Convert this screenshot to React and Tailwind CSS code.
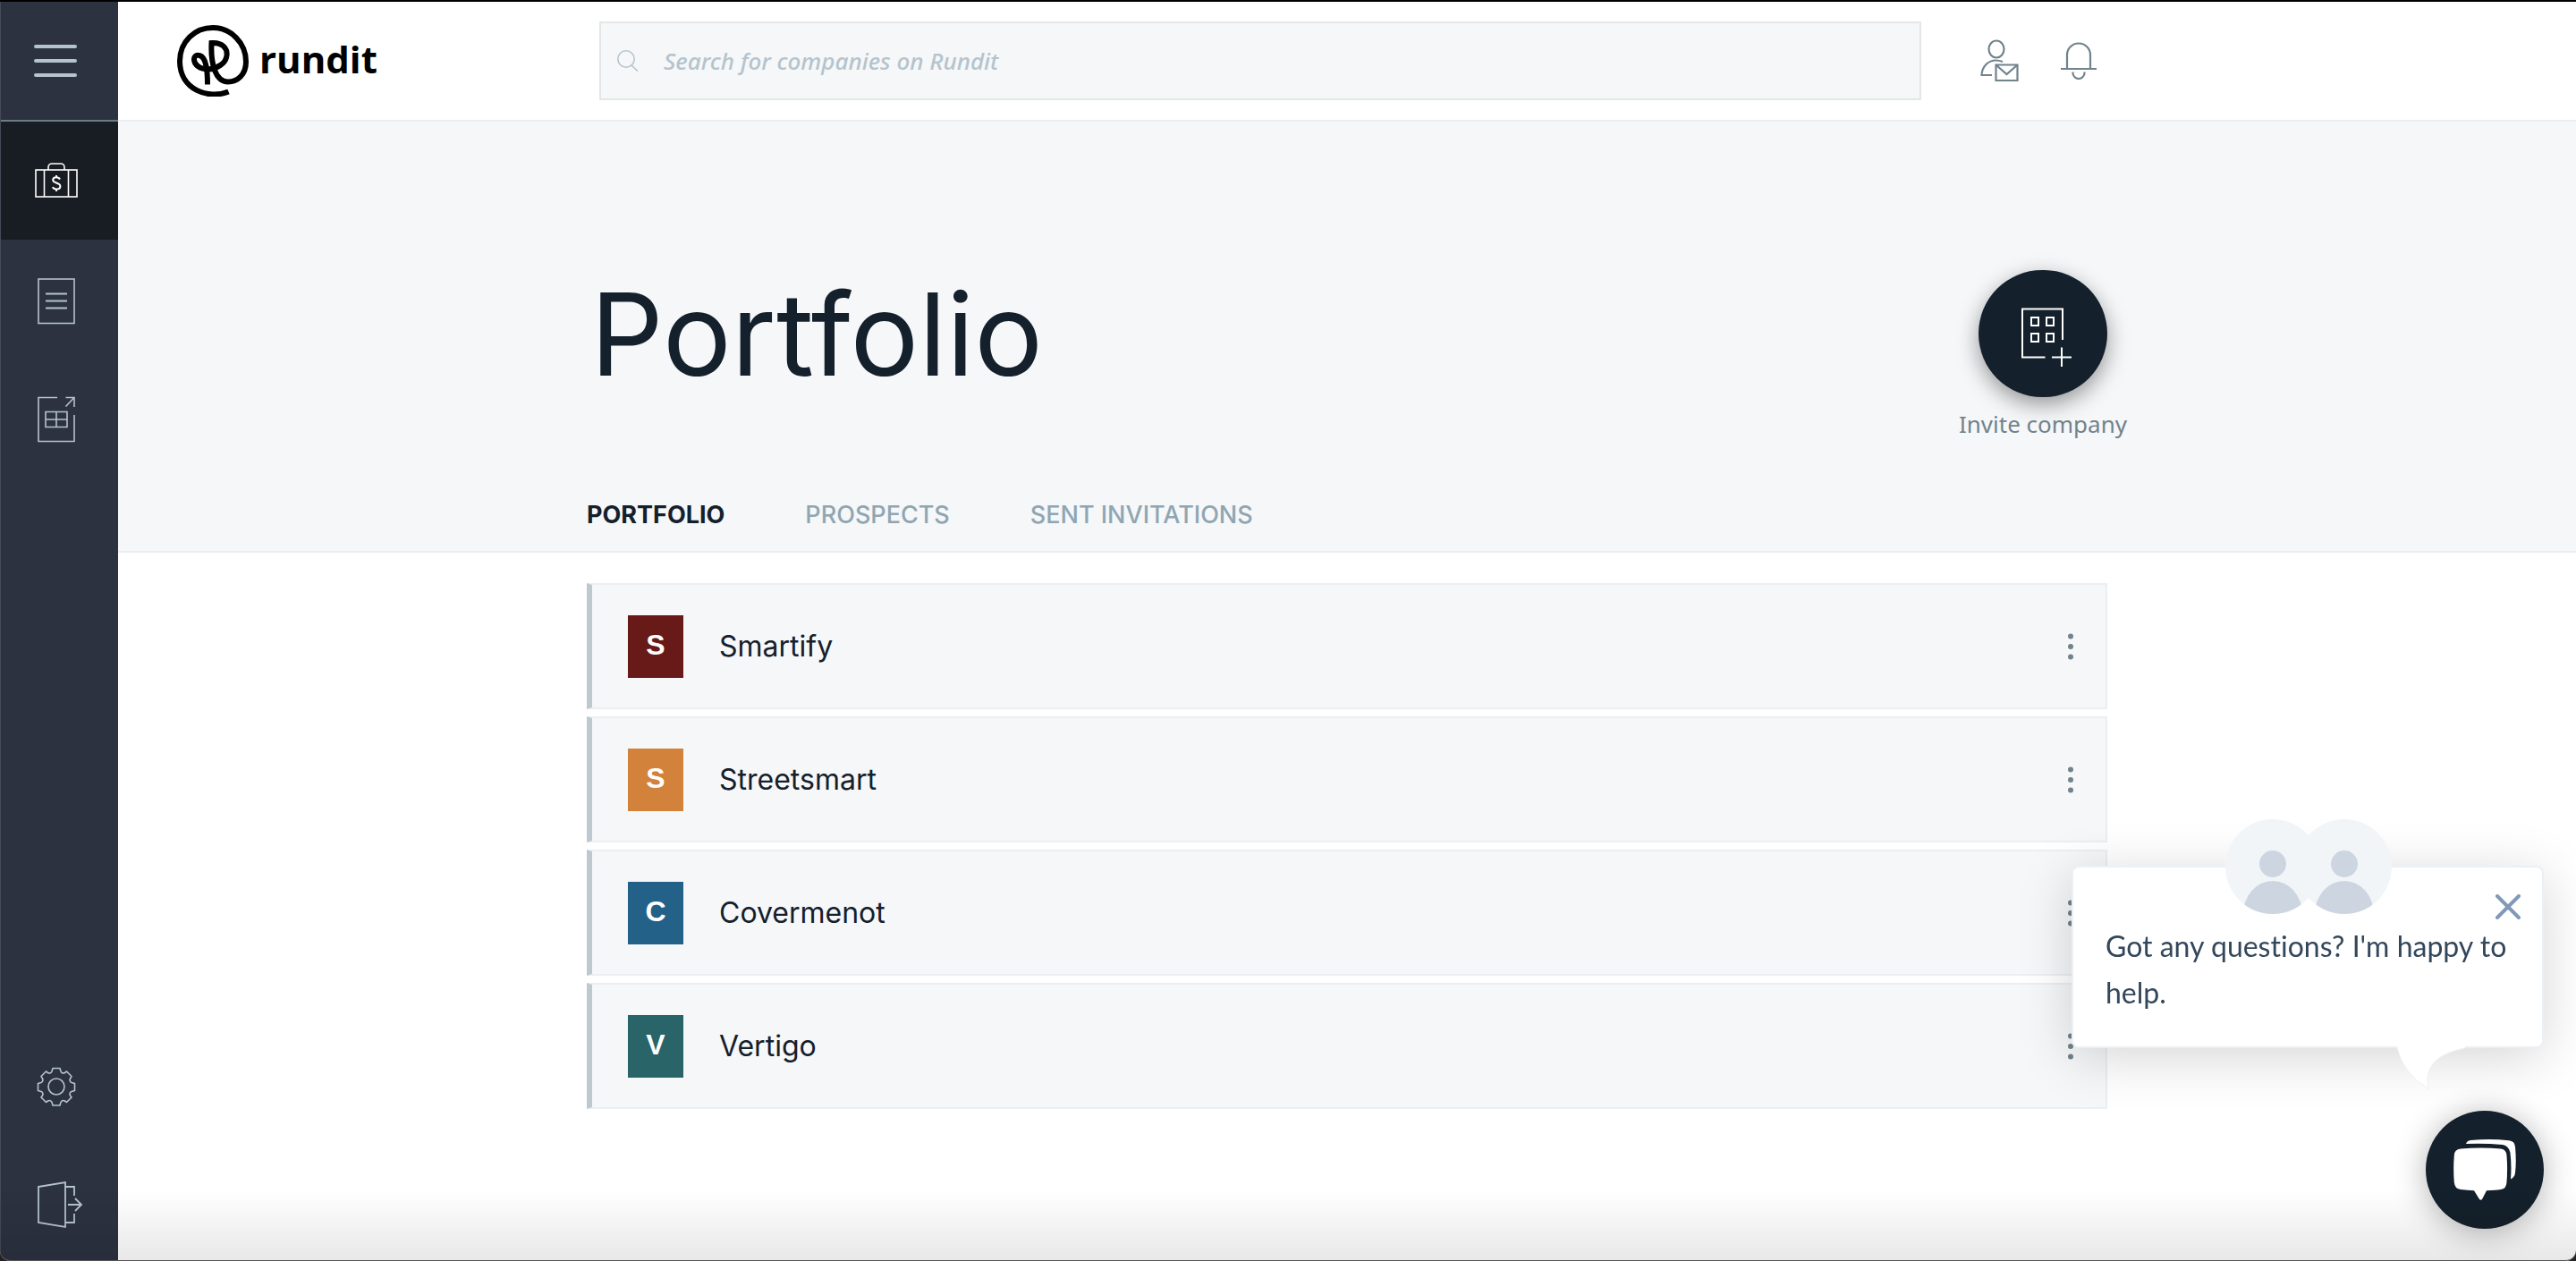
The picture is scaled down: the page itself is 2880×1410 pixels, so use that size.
import clsx from "clsx";

const TABS = ["PORTFOLIO", "PROSPECTS", "SENT INVITATIONS"];

const COMPANIES = [
  { name: "Smartify", color: "bg-[#671a17]" },
  { name: "Streetsmart", color: "bg-[#d3823b]" },
  { name: "Covermenot", color: "bg-[#246188]" },
  { name: "Vertigo", color: "bg-[#286468]" },
];

// Sidebar icons, all drawn on the same 52px box
const BriefcaseIcon = () => (
  <svg width="52" height="52" viewBox="0 0 52 52" fill="none" stroke="#fff" strokeWidth="1.6" className="h-[52px] w-[52px]">
    <rect x="3" y="14" width="46" height="30" />
    <path d="M12.500 14v30M39.500 14v30M17 14v-3a4 4 0 0 1 4-4h10a4 4 0 0 1 4 4v3" />
    <path d="M30 24.500c-.8-1.600-2.300-2.300-4-2.300-2.300 0-3.800 1.300-3.800 3 0 4 8.200 2.500 8.200 7 0 2-1.800 3.300-4.300 3.300-2 0-3.600-.8-4.200-2.300M26 20v2.200M26 35.500v2.500" strokeWidth="2" />
  </svg>
);

const DocumentIcon = () => (
  <svg width="52" height="52" viewBox="0 0 52 52" fill="none" stroke="#b4c4cd" strokeWidth="1.6" className="h-[52px] w-[52px]">
    <rect x="6" y="1" width="40" height="49.500" />
    <path d="M14 17.500h24M14 25.500h24M14 33.500h24" strokeWidth="2" />
  </svg>
);

const ExportIcon = () => (
  <svg width="52" height="52" viewBox="0 0 52 52" fill="none" stroke="#b4c4cd" strokeWidth="1.6" className="h-[52px] w-[52px]">
    <path d="M27 1.500H6v49h40V21" />
    <path d="M36.500 1.500H46V12M46 1.500 36.500 11.500" />
    <path d="M14 17.500h24v17H14zM14 26h24M26 17.500v17" />
  </svg>
);

const GearIcon = () => (
  <svg width="52" height="52" viewBox="0 0 52 52" fill="none" stroke="#b4c4cd" strokeWidth="1.6" strokeLinejoin="round" className="h-[52px] w-[52px]">
    <circle cx="26" cy="26" r="9" />
    <path d="M22 5.500h8l1 3.500c.8 2 2.800 2.500 4.500 1.500l2-1.500 5.500 5.500-1.500 2.500c-1 1.500-.3 3.800 1.500 4.500l3.500 1v8l-3.500 1c-2 .8-2.500 3-1.500 4.500l1.500 2-5.500 5.500-2-1.500c-1.700-1-4-.3-4.500 1.500l-1 3.500h-8l-1-3.500c-.5-1.800-2.800-2.500-4.500-1.500l-2 1.500L9 38l1.500-2c1-1.500.5-3.700-1.500-4.500l-3.500-1v-8l3.500-1c1.800-.7 2.500-3 1.500-4.500L9 14.500 14.500 9l2 1.500c1.700 1 3.700.5 4.500-1.500z" />
  </svg>
);

const LogoutIcon = () => (
  <svg width="52" height="52" viewBox="0 0 52 52" fill="none" stroke="#b4c4cd" strokeWidth="1.8" className="h-[52px] w-[52px] overflow-visible">
    <path d="M6 6 36 1v50L6 46zM36 6h10v10M36 46h10V36" />
    <path d="M39 26h15M47 19l7 7-7 7" />
  </svg>
);

const Logo = () => (
  <svg width="80" height="80" viewBox="0 0 80 80" fill="none" stroke="#000" className="h-20 w-20 overflow-hidden">
    <path d="M57.500 74.500c-22 9-54.500-2-54.500-34C3 18 20 3 40 3s37 17 37 38c0 15-10 22.500-20 22.500-15 0-19.500-22-18.500-43.500 12-1 18 6 17 14-1 10-12 14.500-20 15.500-10 0-16.500-5-16.500-11 0-4 3-5.500 6-4.500 8 2 9 18 9 32.500" strokeWidth="6" />
  </svg>
);

const SearchIcon = () => (
  <svg width="24" height="24" viewBox="0 0 24 24" fill="none" stroke="#b4c4cd" strokeWidth="1.6" className="h-6 w-6">
    <circle cx="10" cy="10" r="9.200" />
    <path d="m16 17 7 6.500" />
  </svg>
);

const ContactIcon = () => (
  <svg width="44" height="48" viewBox="0 0 44 48" fill="none" stroke="#71838b" strokeWidth="2.200" className="h-12 w-11">
    <ellipse cx="18" cy="11" rx="8.500" ry="9.500" />
    <path d="M13 40H1.500C2 30 9 23.500 17.500 23.500c3 0 5 .5 7.500 1.500" />
    <path d="M17.500 28.500h24v17.500h-24zM18 29l11.500 10L41 29" />
  </svg>
);

const BellIcon = () => (
  <svg width="40" height="42" viewBox="0 0 40 42" fill="none" stroke="#71838b" strokeWidth="2.200" className="h-[42px] w-10">
    <path d="M0 30h40M7 30V14.500a13 13 0 0 1 26 0V30M13.500 33.500v1a6.500 6.500 0 0 0 13 0v-1" />
  </svg>
);

const InviteIcon = () => (
  <svg width="56" height="66" viewBox="0 0 56 66" fill="none" stroke="#fff" strokeWidth="2" className="h-[66px] w-14">
    <path d="M26.500 55.500H1v-54h45V36" />
    <path d="M11 11h8v9h-8zM28 11h8v9h-8zM11 29h8v9h-8zM28 29h8v9h-8z" />
    <path d="M45 44.500v21.500M34 55.500h22" />
  </svg>
);

const DotsIcon = () => (
  <svg width="8" height="30" viewBox="0 0 8 30" fill="#71838b" className="h-[30px] w-2">
    <circle cx="4" cy="3.500" r="3" />
    <circle cx="4" cy="15" r="3" />
    <circle cx="4" cy="26.500" r="3" />
  </svg>
);

const CloseIcon = () => (
  <svg width="28" height="28" viewBox="0 0 28 28" fill="none" stroke="#8199b7" strokeWidth="4" strokeLinecap="round" className="h-7 w-7">
    <path d="m2 2 24 24M26 2 2 26" />
  </svg>
);

const Avatars = () => (
  <svg width="186" height="106" viewBox="0 0 186 106" className="h-[106px] w-[186px]">
    <defs>
      <clipPath id="left"><circle cx="53" cy="53" r="53" /></clipPath>
      <clipPath id="right"><circle cx="133" cy="53" r="53" /></clipPath>
    </defs>
    <circle cx="53" cy="53" r="53" fill="#f1f5f8" />
    <circle cx="133" cy="53" r="53" fill="#f1f5f8" />
    <g fill="#cdd5e1">
      <circle cx="53" cy="50" r="15" />
      <circle cx="133" cy="50" r="15" />
      <ellipse cx="53" cy="106" rx="33" ry="37" clipPath="url(#left)" />
      <ellipse cx="133" cy="106" rx="33" ry="37" clipPath="url(#right)" />
    </g>
  </svg>
);

const ChatIcon = () => (
  <svg width="70" height="68" viewBox="0 0 70 68" fill="#fff" className="h-[68px] w-[70px]">
    <path d="M8 10.500Q1 11 .8 18q-1.200 15 0 30Q1.500 55.500 8 56q8 1 15 1.200L29 67q1.500 1.500 3 0l5-9.800Q47 57 53 56q6-.5 6.500-8 1.200-15 0-30Q59 11 53 10.500 31 8.500 8 10.500z" />
    <path d="M14 5q1-3.500 5-4 22-2 43 .2 6.500.6 7 7 1.500 16 0 29-.5 5-5 7.300 1.200-16-.6-30Q62 7.500 55 6 34 4 14 5z" />
  </svg>
);

function NavButton({ label, active, children }) {
  return (
    <button
      aria-label={label}
      className={clsx("flex h-[132px] w-full items-center pl-9", active ? "bg-[#181c23]" : "pt-1.5")}
    >
      {children}
    </button>
  );
}

function Sidebar() {
  return (
    <nav className="flex w-[132px] shrink-0 flex-col border-l border-[#454a58] bg-[#2d3241]">
      <button aria-label="Menu" className="flex h-[134px] flex-col justify-center gap-3 border-b-2 border-[#6d7b84] pl-[37px]">
        <span className="h-1 w-12 rounded-full bg-[#b4c4cd]" />
        <span className="h-1 w-12 rounded-full bg-[#b4c4cd]" />
        <span className="h-1 w-12 rounded-full bg-[#b4c4cd]" />
      </button>
      <NavButton label="Portfolio" active><BriefcaseIcon /></NavButton>
      <NavButton label="Reports"><DocumentIcon /></NavButton>
      <NavButton label="Export"><ExportIcon /></NavButton>
      <div className="mt-auto">
        <NavButton label="Settings"><GearIcon /></NavButton>
        <NavButton label="Log out"><LogoutIcon /></NavButton>
      </div>
    </nav>
  );
}

function Header() {
  return (
    <header className="grid h-[134px] grid-cols-[1fr_minmax(0,1700px)_1fr] items-center border-b-2 border-[#ebeef0] bg-white">
      <a href="#" aria-label="rundit" className="flex items-center gap-3 pl-[66px]">
        <Logo />
        <span className="pb-1 font-['Open_Sans',sans-serif] text-[42px] leading-[56px] font-bold text-black">rundit</span>
      </a>
      <div className="flex items-center pl-3.5">
        <label className="flex h-[88px] flex-1 items-center gap-7 border-2 border-[#e3e7e8] bg-[#f6f7f9] pl-[18px]">
          <SearchIcon />
          <input
            type="search"
            aria-label="Search"
            placeholder="Search for companies on Rundit"
            className="h-full flex-1 bg-transparent font-['Noto_Sans',sans-serif] text-[26px] font-medium italic outline-none placeholder:text-[#b4c4cd]"
          />
        </label>
        <button aria-label="Contact requests" className="ml-[66px]"><ContactIcon /></button>
        <button aria-label="Notifications" className="mr-3 ml-[46px]"><BellIcon /></button>
      </div>
    </header>
  );
}

function Hero() {
  return (
    <section className="border-b-2 border-[#ebeef0] bg-[#f6f7f9] pt-[166px]">
      <div className="mx-auto max-w-[1700px]">
        <div className="flex h-[206px] items-start justify-between">
          <h1 className="pl-1 text-[128px] leading-[144px] text-[#14202b] [font-feature-settings:'calt'_0,'liga'_0]">Portfolio</h1>
          <button className="flex w-36 flex-col items-center gap-3 font-['Noto_Sans',sans-serif] text-[26px] leading-9 whitespace-nowrap text-[#71838b]">
            <span className="flex h-[142px] w-36 items-center justify-center rounded-full bg-[#14202b] pt-2 pl-2 shadow-[0_8px_24px_rgba(0,0,0,0.4)]">
              <InviteIcon />
            </span>
            Invite company
          </button>
        </div>
        <div role="tablist" className="flex h-[108px] gap-[90px] pt-7">
          {TABS.map((tab, i) => (
            <button
              key={tab}
              role="tab"
              aria-selected={i === 0}
              className={clsx("h-20 text-[27px] leading-8", i === 0 ? "font-bold text-[#14202b]" : "font-medium text-[#8fa6b2]")}
            >
              {tab}
            </button>
          ))}
        </div>
      </div>
    </section>
  );
}

function CompanyRow({ company }) {
  return (
    <li className="flex h-[141px] items-center border-2 border-l-[6px] border-[#ebeff2] border-l-[#bec9cf] bg-[#f6f7f9] pr-[35px] pl-10">
      <span className={clsx("flex h-[70px] w-[62px] items-center justify-center pb-1 font-['Liberation_Sans',sans-serif] text-[32px] font-bold text-white", company.color)}>
        {company.name[0]}
      </span>
      <span className="ml-10 flex-1 text-[32px] leading-10 text-[#14202b]">{company.name}</span>
      <button aria-label={`${company.name} options`}><DotsIcon /></button>
    </li>
  );
}

function ChatWidget() {
  return (
    <aside className="fixed right-9 bottom-9 flex flex-col items-end gap-[70px]">
      <div className="relative h-[204px] w-[528px] rounded-lg border-2 border-[#ebf0f5] bg-white pt-[62px] pl-9 shadow-[0_10px_60px_rgba(0,0,0,0.17)]">
        <div className="absolute -top-[54px] left-[170px]"><Avatars /></div>
        <button aria-label="Close" className="absolute top-[30px] right-6"><CloseIcon /></button>
        <p className="font-['Lato',sans-serif] text-[32px] leading-[52px] text-[#33475b] [font-variant-ligatures:none]">Got any questions? I'm happy to help.</p>
        <svg width="78" height="50" viewBox="0 0 78 50" className="absolute top-[200px] left-[360px] h-[50px] w-[78px]">
          <path d="M0 0h78v2Q36 10 36 38l1 10Q8 29 2 0z" fill="#fff" />
          <path d="M78 2Q36 10 36 38l1 10Q8 29 2 2" fill="none" stroke="#ebf0f5" />
        </svg>
      </div>
      <button aria-label="Open chat" className="flex h-[132px] w-[132px] items-center justify-center rounded-full bg-[#14202b] shadow-[0_4px_36px_rgba(0,0,0,0.3)]">
        <ChatIcon />
      </button>
    </aside>
  );
}

export default function App() {
  return (
    <div className="flex min-h-screen flex-col border-t-2 border-black bg-[#222] font-['Inter',sans-serif]">
      <div className="flex flex-1 overflow-hidden rounded-b-xl bg-white">
        <Sidebar />
        <main className="min-w-0 flex-1">
          <Header />
          <Hero />
          <ul className="mx-auto flex max-w-[1700px] flex-col gap-2 pt-[34px]">
            {COMPANIES.map((company) => (
              <CompanyRow key={company.name} company={company} />
            ))}
          </ul>
        </main>
      </div>
      <ChatWidget />
      <div className="pointer-events-none fixed inset-x-0 bottom-0 h-20 rounded-b-xl border-b border-[#555] bg-linear-to-t from-black/9 to-transparent" />
    </div>
  );
}
